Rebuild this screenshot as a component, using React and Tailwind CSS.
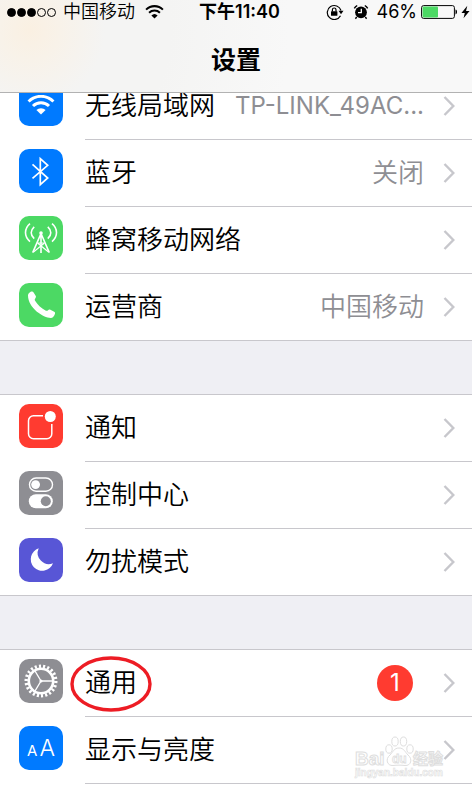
import { clsx } from 'clsx'

// ── Icons ─────────────────────────────────────────────────────
function WifiMark({ className }) {
  return (
    <svg viewBox="8 13 28 20" className={className} fill="none" stroke="currentColor" strokeWidth="3">
      <path d="M9.600 19.500a17.500 17.500 0 0 1 24.800 0M14 24a11.500 11.500 0 0 1 16 0" />
      <path d="M22 32.600l-4.600-4.600a6.600 6.600 0 0 1 9.200 0z" fill="currentColor" stroke="none" />
    </svg>
  )
}

function BluetoothIcon() {
  return (
    <svg viewBox="0 0 44 44" fill="none" stroke="white" strokeWidth="1.7">
      <path d="M13.5 15.3L28.7 29 21.3 35.6V9.7l7.4 6.6-15.2 13" />
    </svg>
  )
}

function CellularIcon() {
  return (
    <svg viewBox="0 0 44 44" fill="none" stroke="white" strokeWidth="1.6">
      <path d="M11 7.6c-6 5-6 13 0 18M15.2 10.8c-4 3.6-4 8.2 0 11.8M33 7.6c6 5 6 13 0 18M28.8 10.8c4 3.6 4 8.2 0 11.8" />
      <path d="M22 17.5L13.7 36.6M22 17.5l8.3 19.1M22 17v20" />
      <path d="M18.5 27l11 9M25.5 27l-11 9M18.5 27h7" strokeWidth="1.1" />
      <circle cx="22" cy="17" r="1.8" fill="white" stroke="none" />
    </svg>
  )
}

function PhoneIcon() {
  return (
    <svg viewBox="0 0 44 44" fill="white">
      <path d="M9 12.5c0-2 2.400-4 4-4 .8 0 1.200.4 1.600 1l2.200 3.600c.5 1-.1 1.700-.7 2.600-.5.8-.5 1.300 0 2.100 2.300 4 6 7.300 10.400 9.700 1 .5 1.600.5 2.300-.1.900-.7 1.500-1.100 2.600-.6l3.800 1.900c1 .5 1.100 1.100.7 2.200-.7 2.200-2 4-4.200 4C24.500 34.900 9 25 9 12.500z" />
    </svg>
  )
}

function NotificationIcon() {
  return (
    <svg viewBox="0 0 44 44" fill="none" stroke="white" strokeWidth="1.5">
      <path d="M24 11.700h-9.500a5 5 0 0 0-5 5v13a5 5 0 0 0 5 5h13.300a5 5 0 0 0 5-5V20" />
      <circle cx="31.3" cy="12.5" r="5.5" fill="white" stroke="none" />
    </svg>
  )
}

function ControlCenterIcon() {
  return (
    <svg viewBox="0 0 44 44" fill="white">
      <rect x="10.5" y="7" width="23" height="13.3" rx="6.6" fill="none" stroke="white" strokeWidth="1.4" />
      <circle cx="16.6" cy="13.6" r="4.4" />
      <rect x="9.8" y="23.3" width="24" height="14" rx="7" />
      <circle cx="26.8" cy="30.3" r="5" fill="#8e8e93" />
    </svg>
  )
}

function MoonIcon() {
  return (
    <svg viewBox="0 0 44 44" fill="white">
      <path d="M19.7 10.3A11.5 11.5 0 1 0 34 25.3 11.2 11.2 0 0 1 19.7 10.3z" />
    </svg>
  )
}

function GearIcon() {
  return (
    <svg viewBox="0 0 44 44" fill="none" stroke="white">
      <circle cx="22" cy="22" r="14.8" strokeWidth="3.4" pathLength="44" strokeDasharray="1 1" />
      <circle cx="22" cy="22" r="12.2" strokeWidth="2.6" />
      <path d="M22 22H34M22 22l-6-10M22 22l-6 10" strokeWidth="1.4" />
      <circle cx="22" cy="22" r="1.6" fill="white" stroke="none" />
    </svg>
  )
}

function DisplayIcon() {
  return (
    <span className="flex h-full items-baseline justify-center gap-[2px] pt-1 font-['Inter',sans-serif] leading-9 text-white">
      <span className="text-[15px]">A</span>
      <span className="text-[23px] font-light">A</span>
    </span>
  )
}

function Chevron() {
  return (
    <svg viewBox="0 0 12 20" className="h-5 w-3 shrink-0" fill="none" stroke="#c7c7cc" strokeWidth="2.4">
      <path d="M1.5 1l8.8 9-8.8 9" />
    </svg>
  )
}

// ── Status bar ────────────────────────────────────────────────
function StatusBar() {
  return (
    <div className="grid h-6 grid-cols-[1fr_auto_1fr] items-center pl-[7px] text-[18px] leading-6">
      <div className="flex items-center">
        <div className="flex gap-px">
          {[1, 2, 3, 4, 5].map((n) => (
            <span
              key={n}
              className={clsx('size-[9px] rounded-full border border-black', n <= 3 && 'bg-black')}
            />
          ))}
        </div>
        <span className="ml-[7px] font-[350]">中国移动</span>
        <WifiMark className="ml-[10px] h-[14px] w-[19px]" />
      </div>

      <span className="font-semibold">下午11:40</span>

      <div className="flex items-center justify-end">
        <svg viewBox="0 0 18 16" className="h-4 w-[18px]" fill="none" stroke="black" strokeWidth="1.2">
          <path d="M14.5 11.8A7 7 0 1 1 15 6.5" />
          <path d="M12.5 6.8h5l-2.5 3.4z" fill="black" stroke="none" />
          <rect x="5" y="7.2" width="6.4" height="4.6" rx=".5" fill="black" stroke="none" />
          <path d="M6.4 7.5V5.8a1.8 1.8 0 0 1 3.6 0v1.7" />
        </svg>
        <svg viewBox="0 0 16 16" className="ml-[9px] size-4" fill="none" stroke="black">
          <circle cx="8" cy="8.3" r="5.9" fill="black" stroke="none" />
          <path d="M1.3 4.4A8 8 0 0 1 4.2 1.5M11.8 1.5a8 8 0 0 1 2.9 2.9M3.7 13l-1.3 1.7M12.3 13l1.3 1.7" strokeWidth="1.4" />
          <path d="M8.3 4.7v4H5" stroke="white" strokeWidth="1.3" />
        </svg>
        <span className="ml-2">46%</span>
        <svg viewBox="0 0 37 14" className="ml-1 h-[14px] w-[37px]">
          <rect x=".6" y=".6" width="32.8" height="12.8" rx="2" fill="none" stroke="black" />
          <rect x="1.6" y="1.6" width="15.4" height="10.8" rx="1" fill="#4cd964" />
          <path d="M34.5 4.6c2 .3 2 4.5 0 4.8z" />
        </svg>
        <svg viewBox="0 0 10 14" className="ml-[3px] mr-[2px] h-[14px] w-[9px]">
          <path d="M7 0L.5 8h3.7L2.8 14 9.5 5.8H5.6z" />
        </svg>
      </div>
    </div>
  )
}

// ── Settings data ─────────────────────────────────────────────
const GROUPS = [
  [
    { label: '无线局域网', value: 'TP-LINK_49AC...', valueStyle: 'text-[24px] font-normal', color: 'bg-[#007aff]', icon: <WifiMark className="mx-auto mt-[13px] h-5 w-7 text-white" /> },
    { label: '蓝牙', value: '关闭', color: 'bg-[#007aff]', icon: <BluetoothIcon /> },
    { label: '蜂窝移动网络', color: 'bg-[#4cd964]', icon: <CellularIcon /> },
    { label: '运营商', value: '中国移动', color: 'bg-[#4cd964]', icon: <PhoneIcon /> },
  ],
  [
    { label: '通知', color: 'bg-[#ff3b30]', icon: <NotificationIcon /> },
    { label: '控制中心', color: 'bg-[#8e8e93]', icon: <ControlCenterIcon /> },
    { label: '勿扰模式', color: 'bg-[#5856d6]', icon: <MoonIcon /> },
  ],
  [
    { label: '通用', badge: 1, marked: true, color: 'bg-[#8e8e93]', icon: <GearIcon /> },
    { label: '显示与亮度', color: 'bg-[#007aff]', icon: <DisplayIcon /> },
  ],
]

function SettingsRow({ item, last }) {
  return (
    <li>
      <button
        type="button"
        className={clsx('flex w-full gap-[22px] pl-[19px] text-left', last ? 'h-[66px]' : 'h-[67px]')}
      >
        <span className={clsx('mt-[9px] size-11 shrink-0 overflow-hidden rounded-[10px]', item.color)}>
          {item.icon}
        </span>
        <span
          className={clsx(
            'flex h-full min-w-0 flex-1 items-center pr-[17px]',
            !last && 'border-b border-[#c8c7cc]',
          )}
        >
          <span className="relative shrink-0 text-[26px] font-[350] leading-8">
            {item.label}
            {item.marked && (
              <svg viewBox="0 0 82 56" className="absolute -left-[15px] -top-[11px] h-14 w-[82px]" fill="none">
                <ellipse cx="41" cy="28" rx="39" ry="26" stroke="#ed1c24" strokeWidth="3.4" />
              </svg>
            )}
          </span>
          <span className={clsx('ml-auto truncate leading-8 text-[#8e8e93]', item.valueStyle ?? 'text-[26px] font-[350]')}>
            {item.value}
          </span>
          {item.badge && (
            <span className="mr-[11px] flex size-9 shrink-0 items-center justify-center rounded-full bg-[#ff3b30] text-[24px] leading-none text-white">
              {item.badge}
            </span>
          )}
          <span className="ml-[19px] shrink-0">
            <Chevron />
          </span>
        </span>
      </button>
    </li>
  )
}

function Watermark() {
  return (
    <svg
      viewBox="0 0 92 44"
      className="pointer-events-none absolute bottom-3 right-[26px] h-11 w-[92px] font-['Liberation_Sans','Noto_Sans_CJK_SC',sans-serif] font-bold"
      fill="white"
      stroke="#dedede"
      strokeWidth="1"
    >
      <ellipse cx="35" cy="13" rx="3.2" ry="4.2" />
      <ellipse cx="41" cy="5.500" rx="3.2" ry="4.500" />
      <ellipse cx="49.500" cy="5.500" rx="3.2" ry="4.500" />
      <ellipse cx="56" cy="13" rx="3.2" ry="4.200" />
      <path d="M45 12c5 0 6 4 9 7 5 4 3 11-3 10.500-4-.5-8-.5-12 0-6 .5-8-6.500-3-10.500 3-3 4-7 9-7z" />
      <text x="1" y="29" fontSize="19">Bai</text>
      <text x="38" y="27" fontSize="12" strokeWidth=".8">du</text>
      <text x="59" y="28" fontSize="15">经验</text>
      <text x="1" y="40" fontSize="10" strokeWidth=".6">jingyan.baidu.com</text>
    </svg>
  )
}

export default function App() {
  return (
    <div className="min-h-screen overflow-hidden bg-[#efeff4] font-['Inter','Noto_Sans_CJK_SC',sans-serif] text-black">
      <header className="relative z-10 h-[93px] border-b border-[#b2b2b2] bg-[#f7f7f7] bg-[radial-gradient(circle_at_30px_30px,#faf0e2_0%,#f8f2e9_30px,#f4f4f3_75px,#f4f4f3_140px,#f8f8f8_260px)]">
        <StatusBar />
        <h1 className="mt-[18px] text-center text-[25px] font-semibold leading-9">设置</h1>
      </header>

      {/* first group is scrolled partly under the header */}
      <main className="relative -mt-5 flex flex-col gap-[53px]">
        {GROUPS.map((items, g) => (
          <ul
            key={items[0].label}
            className={clsx(
              'bg-white',
              g > 0 && 'border-t border-[#c8c7cc]',
              g < GROUPS.length - 1 ? 'border-b border-[#c8c7cc]' : 'relative pb-2',
            )}
          >
            {items.map((item, i) => (
              <SettingsRow
                key={item.label}
                item={item}
                last={g < GROUPS.length - 1 && i === items.length - 1}
              />
            ))}
            {g === GROUPS.length - 1 && <Watermark />}
          </ul>
        ))}
      </main>
    </div>
  )
}
